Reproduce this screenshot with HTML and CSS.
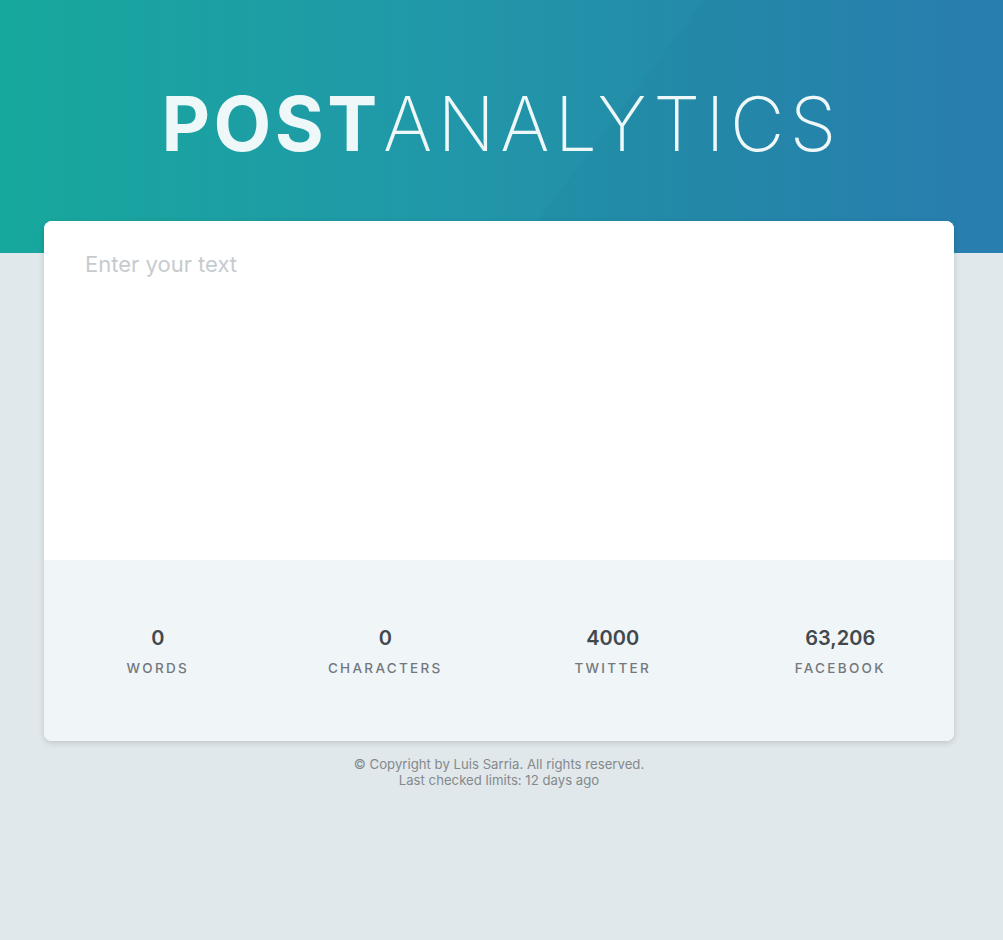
FILE: index.html
```html
<!DOCTYPE html>
<html lang="en">
<head>
<meta charset="utf-8">
<title>Post Analytics</title>
<link rel="stylesheet" href="styles.css">
</head>
<body>
<header class="hero">
  <div class="hero-shape"></div>
  <h1 class="title"><span class="title-bold">POST</span><span class="title-thin">ANALYTICS</span></h1>
</header>
<main class="wrap">
  <section class="card">
    <textarea class="input" placeholder="Enter your text"></textarea>
    <div class="stats">
      <div class="stat"><div class="stat-num">0</div><div class="stat-label">Words</div></div>
      <div class="stat"><div class="stat-num">0</div><div class="stat-label">Characters</div></div>
      <div class="stat"><div class="stat-num">4000</div><div class="stat-label">Twitter</div></div>
      <div class="stat"><div class="stat-num">63,206</div><div class="stat-label">Facebook</div></div>
    </div>
  </section>
  <footer class="footer">
    <p>© Copyright by Luis Sarria. All rights reserved.</p>
    <p>Last checked limits: 12 days ago</p>
  </footer>
</main>
</body>
</html>
```
FILE: styles.css
```css
* { box-sizing: border-box; }
html, body { margin: 0; padding: 0; }
body {
  background: #e0e8eb;
  font-family: Inter, "Noto Sans", sans-serif;
  min-height: 940px;
}
.hero {
  position: relative;
  height: 253px;
  background: linear-gradient(90deg, #17a89d 0%, #2197a9 45%, #248ba9 70%, #2a80b2 100%);
  overflow: hidden;
  display: flex;
  justify-content: center;
  padding-top: 81px;
}
.hero-shape {
  position: absolute;
  left: 704px;
  top: 0;
  width: 700px;
  height: 300px;
  background: rgba(20, 80, 120, 0.04);
  transform: skewX(-37deg);
  transform-origin: top left;
}
.title {
  position: relative;
  margin: 0;
  font-size: 75px;
  line-height: 86px;
  color: #eef8f8;
  font-weight: 400;
  height: 86px;
}
.title-bold { font-weight: 700; letter-spacing: 3.5px; }
.title-thin { font-weight: 200; letter-spacing: 5.3px; margin-left: 2px; }
.wrap {
  width: 910px;
  margin: -32px 0 0 44px;
  position: relative;
}
.card {
  background: #fff;
  border-radius: 8px;
  box-shadow: 0 2px 6px rgba(0, 0, 0, 0.15);
  overflow: hidden;
}
.input {
  display: block;
  width: 100%;
  height: 339px;
  border: 0;
  outline: none;
  resize: none;
  padding: 29px 41px;
  font-family: Inter, "Noto Sans", sans-serif;
  font-size: 22px;
  line-height: 28px;
  color: #444;
  background: #fff;
}
.input::placeholder { color: #c6cbcf; }
.stats {
  background: #f0f5f8;
  height: 181px;
  display: grid;
  grid-template-columns: repeat(4, 1fr);
  align-content: center;
}
.stat { text-align: center; }
.stat-num {
  font-size: 20px;
  font-weight: 600;
  color: #43484c;
  line-height: 24px;
}
.stat-label {
  margin-top: 10px;
  font-size: 13.5px;
  letter-spacing: 2.3px;
  text-transform: uppercase;
  color: #72787d;
  font-weight: 500;
  line-height: 16px;
}
.footer {
  text-align: center;
  color: #85898c;
  font-size: 13.2px;
  line-height: 16px;
  padding-top: 15px;
}
.footer p { margin: 0; }
```
